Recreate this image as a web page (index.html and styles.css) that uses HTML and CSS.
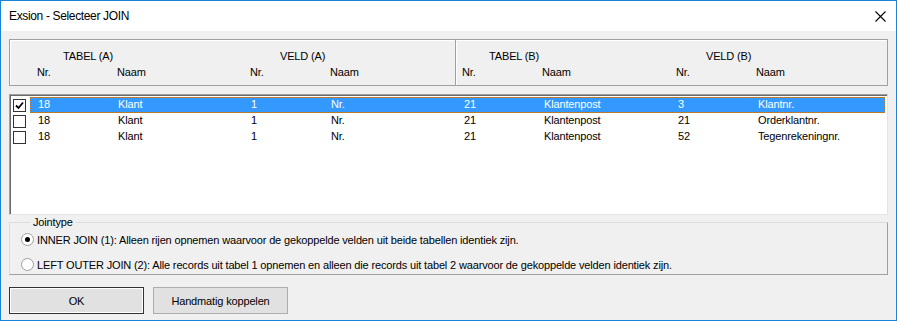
FILE: index.html
```html
<!DOCTYPE html>
<html lang="nl">
<head>
  <meta charset="UTF-8">
  <link rel="stylesheet" href="styles.css">
  <title>Exsion - Selecteer JOIN</title>
</head>
<body>

<div class="window">
  <div class="titlebar">
    <span class="title">Exsion - Selecteer JOIN</span>
    <svg class="close" width="11" height="11" viewBox="0 0 11 11">
      <path d="M0.5 0.5 L10.5 10.5 M10.5 0.5 L0.5 10.5" stroke="#000" stroke-width="1.1" fill="none"/>
    </svg>
  </div>

  <div class="content">
    <div class="header">
      <div class="half left">
        <div class="cols top">
          <span class="grp g1">TABEL (A)</span>
          <span></span>
          <span class="grp g2">VELD (A)</span>
          <span></span>
        </div>
        <div class="cols">
          <span>Nr.</span><span>Naam</span><span>Nr.</span><span>Naam</span>
        </div>
      </div>
      <div class="half right">
        <div class="cols top">
          <span class="grp g3">TABEL (B)</span>
          <span></span>
          <span class="grp g4">VELD (B)</span>
          <span></span>
        </div>
        <div class="cols">
          <span>Nr.</span><span>Naam</span><span>Nr.</span><span>Naam</span>
        </div>
      </div>
    </div>

    <div class="list">
      <div class="row selected">
        <span class="check checked">
          <svg width="9" height="9" viewBox="0 0 9 9"><path d="M1 4.5 L3.5 7 L8 1.5" stroke="#000" stroke-width="1.8" fill="none"/></svg>
        </span>
        <div class="cells">
          <span>18</span><span>Klant</span><span>1</span><span>Nr.</span>
          <span>21</span><span>Klantenpost</span><span>3</span><span>Klantnr.</span>
        </div>
      </div>
      <div class="row">
        <span class="check"></span>
        <div class="cells">
          <span>18</span><span>Klant</span><span>1</span><span>Nr.</span>
          <span>21</span><span>Klantenpost</span><span>21</span><span>Orderklantnr.</span>
        </div>
      </div>
      <div class="row">
        <span class="check"></span>
        <div class="cells">
          <span>18</span><span>Klant</span><span>1</span><span>Nr.</span>
          <span>21</span><span>Klantenpost</span><span>52</span><span>Tegenrekeningnr.</span>
        </div>
      </div>
    </div>

    <fieldset class="jointype">
      <legend>Jointype</legend>
      <label class="option"><span class="radio on"></span>INNER JOIN (1): Alleen rijen opnemen waarvoor de gekoppelde velden uit beide tabellen identiek zijn.</label>
      <label class="option"><span class="radio"></span>LEFT OUTER JOIN (2): Alle records uit tabel 1 opnemen en alleen die records uit tabel 2 waarvoor de gekoppelde velden identiek zijn.</label>
    </fieldset>

    <div class="buttons">
      <button class="default">OK</button>
      <button>Handmatig koppelen</button>
    </div>
  </div>
</div>

</body>
</html>
```

FILE: styles.css
```css
body {
  margin: 0;
  font-family: "Liberation Sans", Arial, sans-serif;
  font-size: 11px;
  letter-spacing: -0.15px;
  color: #000;
}

.window {
  width: 897px;
  height: 321px;
  box-sizing: border-box;
  border: 1px solid #1883d7;
  background-color: #f0f0f0;
}

.titlebar {
  height: 30px;
  background-color: #fff;
  display: flex;
  align-items: center;
  justify-content: space-between;
  padding: 0 10px 0 8px;
}

.title {
  font-size: 12px;
  letter-spacing: -0.35px;
}

.content {
  padding: 8px 8px 0 8px;
}

.header {
  height: 47px;
  box-sizing: border-box;
  border: 1px solid #a0a0a0;
  box-shadow: inset 1px 1px #fff;
  display: flex;
}

.half {
  padding-top: 8px;
  box-sizing: border-box;
}

.half.left {
  width: 446px;
  border-right: 1px solid #a0a0a0;
  box-shadow: 1px 0 #fff;
  padding-left: 27px;
}

.half.right {
  flex: 1;
  padding-left: 6px;
}

.cols {
  display: grid;
  grid-template-columns: 80px 133px 80px 133px;
  line-height: 16px;
}

.half.right .cols {
  grid-template-columns: 80px 134px 80px 120px;
}

.grp { white-space: nowrap; }
.grp.g1 { padding-left: 26px; }
.grp.g2 { padding-left: 30px; }
.grp.g3 { padding-left: 27px; }
.grp.g4 { padding-left: 30px; }

.list {
  margin-top: 8px;
  height: 121px;
  box-sizing: border-box;
  background-color: #fff;
  border: 1px solid #a0a0a0;
  border-right-color: #e3e3e3;
  border-bottom-color: #e3e3e3;
  box-shadow: inset 1px 1px #696969;
  padding: 2px 2px 0 2px;
}

.row {
  display: flex;
  height: 16px;
  align-items: center;
}

.check {
  width: 11px;
  height: 11px;
  border: 1px solid #333;
  background-color: #fff;
  margin: 0 4px 0 1px;
  display: flex;
  align-items: center;
  justify-content: center;
}

.cells {
  flex: 1;
  height: 16px;
  box-sizing: border-box;
  display: grid;
  grid-template-columns: 80px 133px 80px 133px 80px 134px 80px 1fr;
  padding-left: 8px;
  line-height: 15px;
}

.row.selected .cells {
  background-color: #3399ff;
  color: #fff;
  outline: 1px dotted #b87a2a;
  outline-offset: -1px;
}

.jointype {
  margin: 1px 0 0 0;
  padding: 5px 0 0 11px;
  height: 59px;
  box-sizing: border-box;
  border: 1px solid #a0a0a0;
  border-top-color: #dcdcdc;
  border-left-color: #dcdcdc;
}

.jointype legend {
  padding: 0 3px;
  margin-left: 9px;
  line-height: 12px;
}

.option {
  display: flex;
  align-items: center;
  height: 25px;
  margin-top: -6px;
  margin-bottom: 6px;
}

.option + .option {
  margin-top: -6px;
}

.radio {
  width: 11px;
  height: 11px;
  border: 1px solid #a0a0a0;
  border-radius: 50%;
  background-color: #fff;
  margin-right: 3px;
  display: flex;
  align-items: center;
  justify-content: center;
}

.radio.on::after {
  content: "";
  width: 5px;
  height: 5px;
  border-radius: 50%;
  background-color: #000;
}

.buttons {
  display: flex;
  gap: 9px;
  margin-top: 12px;
}

button {
  width: 135px;
  height: 27px;
  font-family: "Liberation Sans", Arial, sans-serif;
  font-size: 11px;
  letter-spacing: -0.15px;
  background-color: #e1e1e1;
  border: 1px solid #adadad;
  padding: 0;
}

button.default {
  border: 1px solid #333;
  box-shadow: inset 0 0 0 1px #fff;
}
```
